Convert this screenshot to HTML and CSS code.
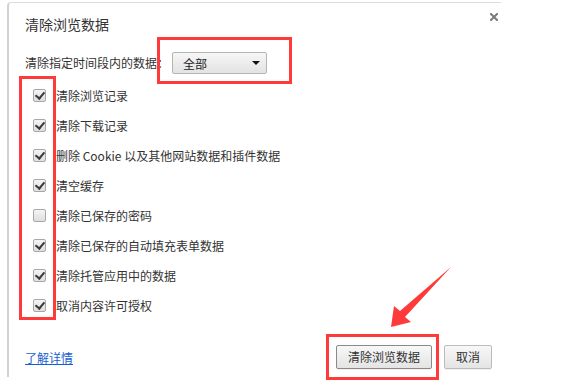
FILE: index.html
```html
<!DOCTYPE html>
<html lang="zh-CN">
<head>
<meta charset="utf-8">
<title>清除浏览数据</title>
<link rel="stylesheet" href="styles.css">
</head>
<body>
<div class="dialog">
  <div class="header">
    <div class="title">清除浏览数据</div>
    <svg class="close" width="8" height="8" viewBox="0 0 8 8"><path d="M1 1L7 7M7 1L1 7" stroke="#7a7a7a" stroke-width="2" stroke-linecap="square"/></svg>
  </div>
  <div class="range">
    <span class="label">清除指定时间段内的数据：</span>
    <div class="select"><span>全部</span><svg width="8" height="4" viewBox="0 0 8 4"><path d="M0 0H8L4 4Z" fill="#111"/></svg></div>
  </div>
  <div class="list">
    <label class="row"><span class="cb on"></span><span>清除浏览记录</span></label>
    <label class="row"><span class="cb on"></span><span>清除下载记录</span></label>
    <label class="row"><span class="cb on"></span><span>删除 Cookie 以及其他网站数据和插件数据</span></label>
    <label class="row"><span class="cb on"></span><span>清空缓存</span></label>
    <label class="row"><span class="cb"></span><span>清除已保存的密码</span></label>
    <label class="row"><span class="cb on"></span><span>清除已保存的自动填充表单数据</span></label>
    <label class="row"><span class="cb on"></span><span>清除托管应用中的数据</span></label>
    <label class="row"><span class="cb on"></span><span>取消内容许可授权</span></label>
  </div>
  <div class="footer">
    <a class="link" href="#">了解详情</a>
    <div class="buttons">
      <button class="btn primary">清除浏览数据</button>
      <button class="btn">取消</button>
    </div>
  </div>
</div>
<div class="mark mark-select"></div>
<div class="mark mark-checks"></div>
<div class="mark mark-button"></div>
<svg class="arrow" width="565" height="392" viewBox="0 0 565 392"><polygon points="391,327 394,306 400,311 451,267 405,317 411,322" fill="#ff3a3a"/></svg>
</body>
</html>
```
FILE: styles.css
```css
* { box-sizing: border-box; }
html, body { margin: 0; padding: 0; background: #fff; }
body {
  width: 565px;
  height: 392px;
  position: relative;
  overflow: hidden;
  font-family: "Noto Sans CJK SC", "Noto Sans", sans-serif;
  font-size: 12px;
  color: #333;
}
.dialog {
  margin: 2px 0 0 7px;
  width: 494px;
  border-top: 1px solid #dcdcdc;
  border-left: 2px solid #d2d2d2;
  border-top-left-radius: 4px;
  padding-bottom: 8px;
}
.header {
  display: flex;
  justify-content: space-between;
  align-items: flex-start;
  padding: 11px 3px 0 16px;
}
.title {
  font-size: 14px;
  line-height: 20px;
  color: #333;
}
.close { margin-top: -1px; display: block; }
.range {
  display: flex;
  align-items: center;
  margin-top: 18px;
  padding-left: 16px;
  height: 22px;
}
.label { line-height: 22px; }
.select {
  margin-left: 3px;
  width: 95px;
  height: 22px;
  border: 1px solid #b4b4b4;
  border-radius: 2px;
  background: linear-gradient(#f6f6f6, #e3e3e3);
  display: flex;
  align-items: center;
  justify-content: space-between;
  padding: 0 6px 0 10px;
  color: #222;
}
.select svg { display: block; margin-top: -1px; }
.list {
  margin-top: 6px;
  padding-left: 24px;
}
.row {
  display: flex;
  align-items: center;
  height: 30px;
  gap: 10px;
}
.cb {
  width: 13px;
  height: 13px;
  border: 1px solid #a8a8a8;
  border-radius: 2px;
  background: linear-gradient(#f4f4f4, #dedede);
  flex: none;
  position: relative;
}
.cb.on::after {
  content: "";
  position: absolute;
  left: 3px;
  top: 0px;
  width: 4px;
  height: 7px;
  border-right: 2.5px solid #3a3a3a;
  border-bottom: 2.5px solid #3a3a3a;
  transform: rotate(40deg);
}
.footer {
  display: flex;
  justify-content: space-between;
  align-items: center;
  margin-top: 25px;
  padding: 0 9px 0 16px;
  height: 24px;
}
.link {
  color: #1a5fd0;
  text-decoration: underline;
}
.buttons { display: flex; gap: 12px; }
.btn {
  font-family: inherit;
  font-size: 12px;
  color: #333;
  height: 24px;
  padding: 0 11px;
  border: 1px solid #bcbcbc;
  border-radius: 2px;
  background: linear-gradient(#f8f8f8, #e4e4e4);
  box-shadow: 0 1px 0 rgba(0,0,0,0.06);
  line-height: 22px;
}
.btn.primary { border-color: #8a8a8a; }
.mark {
  position: absolute;
  border: 3px solid #ff3a3a;
}
.mark-select { left: 157px; top: 37px; width: 135px; height: 47px; }
.mark-checks { left: 19px; top: 76px; width: 37px; height: 244px; }
.mark-button { left: 326px; top: 334px; width: 113px; height: 46px; }
.arrow { position: absolute; left: 0; top: 0; pointer-events: none; }
```
